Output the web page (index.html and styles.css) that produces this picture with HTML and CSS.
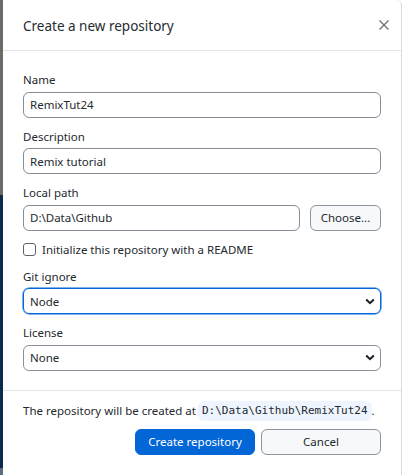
FILE: index.html
```html
<!DOCTYPE html>
<html lang="en">
<head>
<meta charset="utf-8">
<title>Create a new repository</title>
<link rel="stylesheet" href="styles.css">
</head>
<body>
<div class="page">
  <div class="backdrop-strip"></div>
  <div class="dialog">
    <header class="dialog-header">
      <h1 class="dialog-title">Create a new repository</h1>
      <button class="close-btn" aria-label="Close">
        <svg width="10" height="10" viewBox="0 0 10 10"><path d="M0.5 0.5 L9.5 9.5 M9.5 0.5 L0.5 9.5" stroke="#6a737d" stroke-width="1.4" fill="none"/></svg>
      </button>
    </header>
    <div class="dialog-body">
      <div class="field">
        <label class="field-label">Name</label>
        <input class="text-input" type="text" value="RemixTut24">
      </div>
      <div class="field">
        <label class="field-label">Description</label>
        <input class="text-input" type="text" value="Remix tutorial">
      </div>
      <div class="field">
        <label class="field-label">Local path</label>
        <div class="path-row">
          <input class="text-input path-input" type="text" value="D:\Data\Github">
          <button class="btn btn-secondary choose-btn">Choose...</button>
        </div>
      </div>
      <label class="checkbox-row">
        <span class="checkbox"></span>
        <span>Initialize this repository with a README</span>
      </label>
      <div class="field">
        <label class="field-label">Git ignore</label>
        <div class="select focused">
          <span>Node</span>
          <svg class="chevron" width="10" height="7" viewBox="0 0 10 7"><path d="M1.2 1.5 L5 5.2 L8.8 1.5" stroke="#1b1f23" stroke-width="2" fill="none"/></svg>
        </div>
      </div>
      <div class="field">
        <label class="field-label">License</label>
        <div class="select">
          <span>None</span>
          <svg class="chevron" width="10" height="7" viewBox="0 0 10 7"><path d="M1.2 1.5 L5 5.2 L8.8 1.5" stroke="#1b1f23" stroke-width="2" fill="none"/></svg>
        </div>
      </div>
    </div>
    <footer class="dialog-footer">
      <p class="footer-note">The repository will be created at <code class="path-code">D:\Data\Github\RemixTut24</code>.</p>
      <div class="button-row">
        <button class="btn btn-primary">Create repository</button>
        <button class="btn btn-secondary">Cancel</button>
      </div>
    </footer>
  </div>
</div>
</body>
</html>
```

FILE: styles.css
```css
* { box-sizing: border-box; }

html, body {
  margin: 0;
  padding: 0;
  height: 100%;
}

body {
  font-family: "Noto Sans", "Open Sans", sans-serif;
  font-size: 11.5px;
  color: #24292e;
  background: #ffffff;
}

.page {
  display: flex;
  height: 475px;
  width: 402px;
  overflow: hidden;
}

.backdrop-strip {
  width: 3px;
  flex: none;
  background: linear-gradient(to bottom, #6e6a66 0, #6e6a66 195px, #0c2a4d 195px, #0c2a4d 468px, #5d6d80 468px);
}

.dialog {
  flex: none;
  width: 399px;
  height: 475px;
  background: #ffffff;
  border-right: 1px solid #d6d9dd;
  border-top-right-radius: 6px;
  display: flex;
  flex-direction: column;
}

.dialog-header {
  height: 51px;
  flex: none;
  display: flex;
  align-items: center;
  justify-content: space-between;
  padding: 0 9px 0 20px;
  border-bottom: 1px solid #e1e4e8;
}

.dialog-title {
  margin: 0;
  font-size: 13.5px;
  font-weight: 400;
  color: #262b31;
  padding-top: 2px;
}

.close-btn {
  border: 0;
  background: transparent;
  padding: 0;
  width: 16px;
  height: 16px;
  display: flex;
  align-items: center;
  justify-content: center;
  margin-top: -1px;
}

.dialog-body {
  flex: none;
  padding: 21px 20px 0;
  display: flex;
  flex-direction: column;
  gap: 11px;
}

.field {
  display: flex;
  flex-direction: column;
  gap: 3px;
}

.field-label {
  line-height: 16.5px;
  color: #24292e;
}

.text-input {
  font: inherit;
  height: 26px;
  width: 100%;
  border: 1px solid #868d96;
  border-radius: 6px;
  padding: 0 6px;
  color: #24292e;
  background: #fff;
}

.path-row {
  display: flex;
  gap: 10px;
}

.path-input {
  flex: 1;
  width: auto;
}

.choose-btn {
  width: 71px;
  flex: none;
}

.btn {
  font: inherit;
  height: 26px;
  border-radius: 6px;
  padding: 0 8px;
}

.btn-secondary {
  background: #f6f8fa;
  border: 1px solid #8e959e;
  color: #24292e;
}

.btn-primary {
  background: #0366d6;
  border: 1px solid #0366d6;
  color: #ffffff;
}

.checkbox-row {
  display: flex;
  align-items: center;
  gap: 6px;
  height: 16px;
}

.checkbox {
  width: 13px;
  height: 13px;
  border: 1px solid #5e646c;
  border-radius: 3px;
  background: #fff;
  flex: none;
}

.select {
  height: 26px;
  border: 1px solid #8a9099;
  border-radius: 6px;
  display: flex;
  align-items: center;
  justify-content: space-between;
  padding: 0 5px 0 6px;
  color: #24292e;
}

.select.focused {
  border-color: #0366d6;
  box-shadow: 0 0 0 0.5px #0366d6;
}

.dialog-footer {
  margin-top: 19px;
  border-top: 1px solid #e1e4e8;
  padding: 10px 20px 20px;
  display: flex;
  flex-direction: column;
  gap: 8px;
}

.footer-note {
  margin: 0;
  height: 20px;
  display: flex;
  align-items: center;
  white-space: nowrap;
}

.path-code {
  font-family: "DejaVu Sans Mono", "Liberation Mono", monospace;
  font-size: 11px;
  background: #eef5ff;
  border-radius: 6px;
  padding: 2px 4px;
  margin-left: 2px;
  line-height: 16px;
}

.button-row {
  display: flex;
  justify-content: flex-end;
  gap: 6px;
}

.button-row .btn {
  width: 120px;
}
```
